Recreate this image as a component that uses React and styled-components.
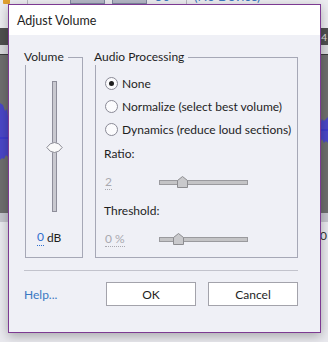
import React from "react";
import styled, { createGlobalStyle } from "styled-components";

const GlobalStyle = createGlobalStyle`
  html, body { margin: 0; padding: 0; }
  body { font-family: Lato, "Noto Sans", sans-serif; font-size: 12px; color: #1e1e1e; }
  * { box-sizing: border-box; }
`;

const Screen = styled.div`
  position: relative;
  width: 328px;
  height: 342px;
  overflow: hidden;
  background: #e9e9ee;
  display: flex;
  flex-direction: column;
`;

const Toolbar = styled.div`
  height: 28px;
  background: #ececf0;
  display: flex;
  align-items: flex-end;
  overflow: hidden;
`;

const ToolRow = styled.div`
  display: flex;
  align-items: center;
  height: 16px;
  margin-top: -12px;
  align-self: flex-start;
  padding-left: 3px;
  white-space: nowrap;
`;

const ToolIcon = styled.div`
  width: 7px;
  height: 16px;
  background: #e0a030;
  border-radius: 1px;
`;

const ToolSep = styled.div`
  width: 1px;
  height: 16px;
  background: #b8b8c0;
  margin-left: ${(p) => p.$ml}px;
`;

const ToolBar = styled.div`
  width: 35px;
  height: 16px;
  background: #b4b8c6;
  border: 1px solid #8088a0;
  margin-left: ${(p) => p.$ml}px;
`;

const ToolText = styled.span`
  color: #3c78c0;
  font-size: 13px;
  line-height: 16px;
  margin-left: ${(p) => p.$ml}px;
`;

const Ruler = styled.div`
  height: 17px;
  background: #4f4f4f;
  display: flex;
  justify-content: flex-end;
  align-items: center;
  color: #e0e0e0;
  font-size: 10px;
  padding-right: 1px;
`;

const TrackHead = styled.div`
  height: 10px;
  background: #d8d8dc;
  border-bottom: 1px solid #3a3a3a;
`;

const Track = styled.div`
  height: 158px;
  background: #6e6e6e;
`;

const TrackFoot = styled.div`
  height: 9px;
  background: #c4c4cc;
`;

const Lower = styled.div`
  flex: 1;
  background: #e9e9ee;
  display: flex;
  justify-content: flex-end;
  padding-top: 6px;
  padding-right: 1px;
  font-size: 12px;
  color: #333;
`;

const Dialog = styled.div`
  position: absolute;
  left: 8px;
  top: 4px;
  width: 313px;
  height: 329px;
  border: 1px solid #7d3a92;
  background: #eff0f6;
  box-shadow: 0 3px 10px rgba(0, 0, 0, 0.28);
  display: flex;
  flex-direction: column;
`;

const TitleBar = styled.div`
  height: 30px;
  background: #ffffff;
  display: flex;
  align-items: center;
  padding-left: 8px;
  font-size: 12.5px;
  color: #1e1e1e;
`;

const Body = styled.div`
  flex: 1;
  display: flex;
  flex-direction: column;
  padding: 14px 22px 0 15px;
  white-space: nowrap;
`;

const Groups = styled.div`
  display: flex;
  gap: 12px;
  margin-left: 1px;
  height: 209px;
`;

const Group = styled.fieldset`
  margin: 0;
  padding: 0;
  border: 1px solid #a6a8b6;
  width: ${(p) => p.$w}px;
  display: flex;
  flex-direction: column;
  min-width: 0;
`;

const Legend = styled.legend`
  padding: 0 4px 0 0;
  margin-left: -2px;
  line-height: 16px;
  font-size: 12px;
  color: #1e1e1e;
`;

const VolumeInner = styled.div`
  flex: 1;
  display: flex;
  flex-direction: column;
  align-items: center;
  padding-top: 16px;
`;

const VTrackWrap = styled.div`
  position: relative;
  width: 16px;
  height: 131px;
  display: flex;
  justify-content: center;
`;

const VTrack = styled.div`
  width: 5px;
  height: 100%;
  background: #c9c9d0;
  border: 1px solid #8e8e9a;
`;

const VThumb = styled.svg`
  position: absolute;
  left: 0;
  top: ${(p) => p.$top}px;
`;

const DbRow = styled.div`
  align-self: flex-start;
  margin-top: 18px;
  padding-left: 11px;
  line-height: 16px;
  display: flex;
  gap: 3px;
  font-size: 12px;
`;

const Value = styled.span`
  color: ${(p) => (p.$disabled ? "#a9a9b0" : "#2f6fce")};
  border-bottom: 1px dotted ${(p) => (p.$disabled ? "#a9a9b0" : "#2f6fce")};
  line-height: 14px;
`;

const ProcInner = styled.div`
  flex: 1;
  display: flex;
  flex-direction: column;
  padding: 7px 0 0 8px;
  font-size: 12px;
`;

const RadioRow = styled.label`
  height: 23px;
  display: flex;
  align-items: center;
  gap: 4px;
  padding-left: 1px;
`;

const RadioCircle = styled.span`
  width: 13px;
  height: 13px;
  flex: none;
  border-radius: 50%;
  border: 1px solid #8a8a96;
  background: #fbfbfd;
  display: flex;
  align-items: center;
  justify-content: center;
  &::after {
    content: "";
    width: 5px;
    height: 5px;
    border-radius: 50%;
    background: ${(p) => (p.$checked ? "#1e1e1e" : "transparent")};
  }
`;

const FieldLabel = styled.div`
  line-height: 16px;
  margin-top: ${(p) => p.$mt}px;
`;

const SliderRow = styled.div`
  height: 24px;
  margin-top: 8px;
  display: flex;
  align-items: center;
  padding-left: 1px;
`;

const ValueBox = styled.div`
  width: 54px;
  display: flex;
`;

const HTrackWrap = styled.div`
  position: relative;
  width: 89px;
  height: 12px;
  display: flex;
  align-items: center;
`;

const HTrack = styled.div`
  width: 100%;
  height: 5px;
  background: #c4c4c6;
  border: 1px solid #9a9a9e;
`;

const HThumb = styled.svg`
  position: absolute;
  top: 0px;
  left: ${(p) => p.$left}px;
`;

const Separator = styled.div`
  height: 1px;
  background: #c2c3cc;
  margin-top: 12px;
`;

const Footer = styled.div`
  display: flex;
  align-items: center;
  margin-top: 11px;
  height: 24px;
`;

const HelpLink = styled.a`
  color: #3a78c2;
  text-decoration: none;
  font-size: 12px;
  flex: 1;
`;

const Button = styled.button`
  width: 90px;
  height: 24px;
  background: #ffffff;
  border: 1px solid #a3a3ab;
  font-family: inherit;
  font-size: 12px;
  color: #1e1e1e;
  padding: 0;
  margin-left: ${(p) => p.$ml || 0}px;
`;

function Waveform() {
  return (
    <svg width="328" height="158" viewBox="0 0 328 158">
      <path
        d="M0 48 L3 50 L5 56 L7 54 L8 62 L9 70 L10 83 L9 96 L8 102 L6 100 L4 104 L2 103 L0 105 Z"
        fill="#4a46c6"
      />
      <path
        d="M328 62 L326 64 L324 66 L322 64 L320 70 L320 88 L322 84 L324 88 L326 86 L328 88 Z"
        fill="#4a46c6"
      />
      <line x1="0" y1="83" x2="12" y2="83" stroke="#3030d0" strokeWidth="1" />
      <line x1="318" y1="75" x2="328" y2="75" stroke="#3030d0" strokeWidth="1" />
    </svg>
  );
}

function HSlider({ pos }) {
  return (
    <HTrackWrap>
      <HTrack />
      <HThumb $left={pos} width="11" height="12" viewBox="0 0 11 12">
        <path d="M0.5 11.5 L0.5 4.5 L5.5 0.5 L10.5 4.5 L10.5 11.5 Z" fill="#c9c9cc" stroke="#8c8c90" />
      </HThumb>
    </HTrackWrap>
  );
}

export default function App() {
  return (
    <>
      <GlobalStyle />
      <Screen>
        <Toolbar>
          <ToolRow>
            <ToolIcon />
            <ToolSep $ml={17} />
            <ToolBar $ml={42} />
            <ToolBar $ml={7} />
            <ToolText $ml={8}>50</ToolText>
            <ToolSep $ml={16} />
            <ToolText $ml={7}>(No Device)</ToolText>
          </ToolRow>
        </Toolbar>
        <Ruler>4</Ruler>
        <TrackHead />
        <Track>
          <Waveform />
        </Track>
        <TrackFoot />
        <Lower>0</Lower>

        <Dialog>
          <TitleBar>Adjust Volume</TitleBar>
          <Body>
            <Groups>
              <Group $w={58}>
                <Legend>Volume</Legend>
                <VolumeInner>
                  <VTrackWrap>
                    <VTrack />
                    <VThumb $top={61} width="17" height="11" viewBox="0 0 17 11">
                      <path
                        d="M0.8 5.5 Q4 0.5 8.5 0.5 Q13 0.5 16.2 5.5 Q13 10.5 8.5 10.5 Q4 10.5 0.8 5.5 Z"
                        fill="#fafafa"
                        stroke="#8a8a94"
                      />
                    </VThumb>
                  </VTrackWrap>
                  <DbRow>
                    <Value>0</Value>
                    <span>dB</span>
                  </DbRow>
                </VolumeInner>
              </Group>
              <Group $w={203}>
                <Legend>Audio Processing</Legend>
                <ProcInner>
                  <RadioRow>
                    <RadioCircle $checked />
                    None
                  </RadioRow>
                  <RadioRow>
                    <RadioCircle />
                    Normalize (select best volume)
                  </RadioRow>
                  <RadioRow>
                    <RadioCircle />
                    Dynamics (reduce loud sections)
                  </RadioRow>
                  <FieldLabel $mt={5}>Ratio:</FieldLabel>
                  <SliderRow>
                    <ValueBox>
                      <Value $disabled>2</Value>
                    </ValueBox>
                    <HSlider pos={18} />
                  </SliderRow>
                  <FieldLabel $mt={9}>Threshold:</FieldLabel>
                  <SliderRow>
                    <ValueBox>
                      <Value $disabled>0 %</Value>
                    </ValueBox>
                    <HSlider pos={14} />
                  </SliderRow>
                </ProcInner>
              </Group>
            </Groups>
            <Separator />
            <Footer>
              <HelpLink href="#">Help...</HelpLink>
              <Button>OK</Button>
              <Button $ml={12}>Cancel</Button>
            </Footer>
          </Body>
        </Dialog>
      </Screen>
    </>
  );
}
